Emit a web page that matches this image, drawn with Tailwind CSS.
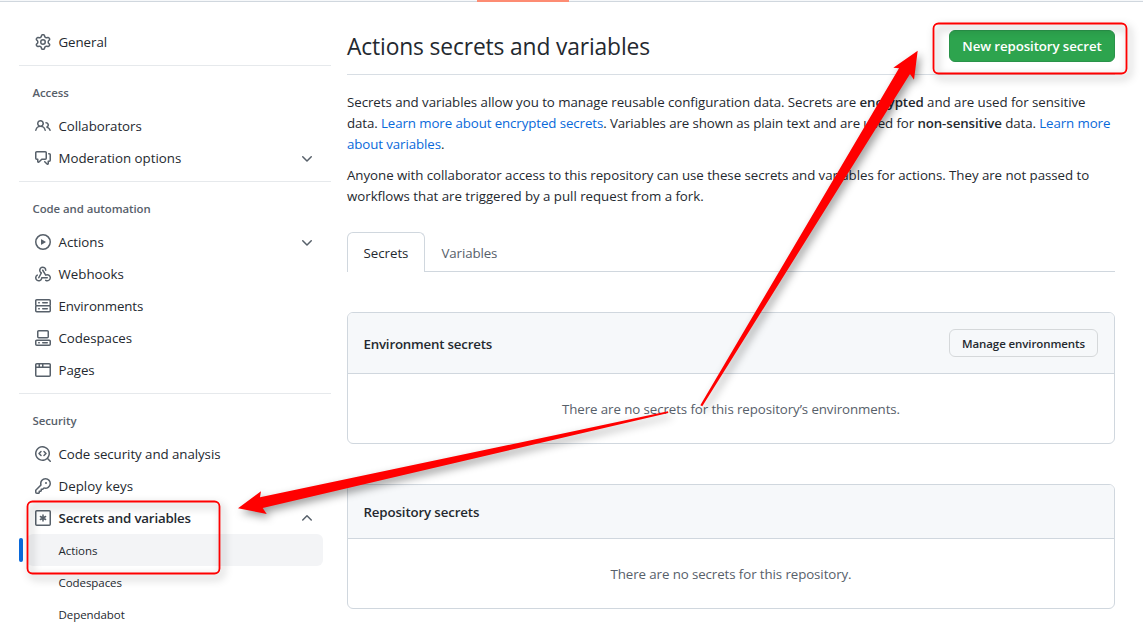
<!DOCTYPE html>
<html lang="en">
<head>
<meta charset="utf-8">
<title>Actions secrets and variables</title>
<script src="https://cdn.jsdelivr.net/npm/@tailwindcss/browser@4"></script>
</head>
<body class="relative h-[633px] w-[1143px] overflow-hidden bg-white font-['Open_Sans','Noto_Sans',sans-serif] text-[13.3px] text-[#24292f]">
<div class="h-0.5 border-b border-[#d0d7de] bg-[#f6f8fa]"></div>
<div class="absolute left-[477px] top-0 h-0.5 w-[92px] bg-[#fd8c73]"></div>

<div class="flex">
<nav class="ml-[19px] mt-6 w-[312px] shrink-0 whitespace-nowrap tracking-[-0.06px]">
  <div class="flex h-8 items-center gap-[7.5px] pl-4">
    <svg class="size-4 fill-[#57606a]" viewBox="0 0 16 16"><path d="M8 0a8.2 8.2 0 0 1 .701.031C9.444.095 9.99.645 10.16 1.29l.288 1.107c.018.066.079.158.212.224.231.114.454.243.668.386.123.082.233.09.299.071l1.103-.303c.644-.176 1.392.021 1.82.63.27.385.506.792.704 1.218.315.675.111 1.422-.364 1.891l-.814.806c-.049.048-.098.147-.088.294.016.257.016.515 0 .772-.01.147.038.246.088.294l.814.806c.475.469.679 1.216.364 1.891a7.977 7.977 0 0 1-.704 1.217c-.428.61-1.176.807-1.82.63l-1.102-.302c-.067-.019-.177-.011-.3.071a5.909 5.909 0 0 1-.668.386c-.133.066-.194.158-.211.224l-.29 1.106c-.168.646-.715 1.196-1.458 1.26a8.006 8.006 0 0 1-1.402 0c-.743-.064-1.289-.614-1.458-1.26l-.289-1.106c-.018-.066-.079-.158-.212-.224a5.738 5.738 0 0 1-.668-.386c-.123-.082-.233-.09-.299-.071l-1.103.303c-.644.176-1.392-.021-1.82-.63a8.12 8.12 0 0 1-.704-1.218c-.315-.675-.111-1.422.363-1.891l.815-.806c.05-.048.098-.147.088-.294a6.214 6.214 0 0 1 0-.772c.01-.147-.038-.246-.088-.294l-.815-.806C.635 6.045.431 5.298.746 4.623a7.92 7.92 0 0 1 .704-1.217c.428-.61 1.176-.807 1.82-.63l1.102.302c.067.019.177.011.3-.071.214-.143.437-.272.668-.386.133-.066.194-.158.211-.224l.29-1.106C6.009.645 6.556.095 7.299.03 7.53.01 7.764 0 8 0Zm-.571 1.525c-.036.003-.108.036-.137.146l-.289 1.105c-.147.561-.549.967-.998 1.189-.173.086-.34.183-.5.29-.417.278-.97.423-1.529.27l-1.103-.303c-.109-.03-.175.016-.195.045-.22.312-.412.644-.573.99-.014.031-.021.11.059.19l.815.806c.411.406.562.957.53 1.456a4.709 4.709 0 0 0 0 .582c.032.499-.119 1.05-.53 1.456l-.815.806c-.081.08-.073.159-.059.19.162.346.353.677.573.989.02.03.085.076.195.046l1.102-.303c.56-.153 1.113-.008 1.53.27.161.107.328.204.501.29.447.222.85.629.997 1.189l.289 1.105c.029.109.101.143.137.146a6.6 6.6 0 0 0 1.142 0c.036-.003.108-.036.137-.146l.289-1.105c.147-.561.549-.967.998-1.189.173-.086.34-.183.5-.29.417-.278.97-.423 1.529-.27l1.103.303c.109.029.175-.016.195-.045.22-.313.411-.644.573-.99.014-.031.021-.11-.059-.19l-.815-.806c-.411-.406-.562-.957-.53-1.456a4.709 4.709 0 0 0 0-.582c-.032-.499.119-1.05.53-1.456l.815-.806c.081-.08.073-.159.059-.19a6.464 6.464 0 0 0-.573-.989c-.02-.03-.085-.076-.195-.046l-1.102.303c-.56.153-1.113.008-1.53-.27a4.44 4.44 0 0 0-.501-.29c-.447-.222-.85-.629-.997-1.189l-.289-1.105c-.029-.11-.101-.143-.137-.146a6.6 6.6 0 0 0-1.142 0ZM11 8a3 3 0 1 1-6 0 3 3 0 0 1 6 0ZM9.5 8a1.5 1.5 0 1 0-3.001.001A1.5 1.5 0 0 0 9.5 8Z"/></svg>
    <span class="pt-0.5">General</span>
  </div>
  <h3 class="mt-[7px] h-[45px] border-t border-[#e6e9ec] pl-[13.5px] pt-[18px] text-[11.4px] leading-[18px] font-semibold text-[#57606a]">Access</h3>
  <div class="flex h-8 items-center gap-[7.5px] pl-4">
    <svg class="size-4 fill-[#57606a]" viewBox="0 0 16 16"><path d="M2 5.5a3.5 3.5 0 1 1 5.898 2.549 5.508 5.508 0 0 1 3.034 4.084.75.75 0 1 1-1.482.235 4 4 0 0 0-7.9 0 .75.75 0 0 1-1.482-.236A5.507 5.507 0 0 1 3.102 8.05 3.493 3.493 0 0 1 2 5.5ZM11 4a3.001 3.001 0 0 1 2.22 5.018 5.01 5.01 0 0 1 2.56 3.012.749.749 0 0 1-.885.954.752.752 0 0 1-.549-.514 3.507 3.507 0 0 0-2.522-2.372.75.75 0 0 1-.574-.73v-.352a.75.75 0 0 1 .416-.672A1.5 1.5 0 0 0 11 5.5.75.75 0 0 1 11 4Zm-5.5-.5a2 2 0 1 0-.001 3.999A2 2 0 0 0 5.5 3.5Z"/></svg>
    <span class="pt-0.5">Collaborators</span>
  </div>
  <div class="flex h-8 items-center gap-[7.5px] pl-4 pr-4">
    <svg class="size-4 fill-[#57606a]" viewBox="0 0 16 16"><path d="M1.75 1h8.5c.966 0 1.75.784 1.75 1.75v5.5A1.75 1.75 0 0 1 10.25 10H7.061l-2.574 2.573A1.458 1.458 0 0 1 2 11.543V10h-.25A1.75 1.75 0 0 1 0 8.25v-5.5C0 1.784.784 1 1.75 1ZM1.5 2.75v5.5c0 .138.112.25.25.25h1a.75.75 0 0 1 .75.75v2.19l2.72-2.72a.749.749 0 0 1 .53-.22h3.5a.25.25 0 0 0 .25-.25v-5.5a.25.25 0 0 0-.25-.25h-8.5a.25.25 0 0 0-.25.25Zm13 2a.25.25 0 0 0-.25-.25h-.5a.75.75 0 0 1 0-1.5h.5c.966 0 1.75.784 1.75 1.75v5.5A1.75 1.75 0 0 1 14.25 12H14v1.543a1.458 1.458 0 0 1-2.487 1.03L9.22 12.28a.749.749 0 0 1 .326-1.275.749.749 0 0 1 .734.215l2.22 2.22v-2.19a.75.75 0 0 1 .75-.75h1a.25.25 0 0 0 .25-.25Z"/></svg>
    <span class="grow pt-0.5 tracking-normal">Moderation options</span>
    <svg class="mt-0.5 size-4 fill-[#57606a]" viewBox="0 0 16 16"><path d="M12.78 5.22a.749.749 0 0 1 0 1.06l-4.25 4.25a.749.749 0 0 1-1.06 0L3.22 6.28a.749.749 0 1 1 1.06-1.06L8 8.939l3.72-3.719a.749.749 0 0 1 1.06 0Z"/></svg>
  </div>
  <h3 class="mt-[7px] h-[45px] border-t border-[#e6e9ec] pl-[13.5px] pt-[18px] text-[11.4px] leading-[18px] font-semibold text-[#57606a]">Code and automation</h3>
  <div class="flex h-8 items-center gap-[7.5px] pl-4 pr-4">
    <svg class="size-4 fill-[#57606a]" viewBox="0 0 16 16"><path d="M8 0a8 8 0 1 1 0 16A8 8 0 0 1 8 0ZM1.5 8a6.5 6.5 0 1 0 13 0 6.5 6.5 0 0 0-13 0Zm4.879-2.773 4.264 2.559a.25.25 0 0 1 0 .428l-4.264 2.559A.25.25 0 0 1 6 10.559V5.442a.25.25 0 0 1 .379-.215Z"/></svg>
    <span class="grow pt-0.5 tracking-normal">Actions</span>
    <svg class="mt-0.5 size-4 fill-[#57606a]" viewBox="0 0 16 16"><path d="M12.78 5.22a.749.749 0 0 1 0 1.06l-4.25 4.25a.749.749 0 0 1-1.06 0L3.22 6.28a.749.749 0 1 1 1.06-1.06L8 8.939l3.72-3.719a.749.749 0 0 1 1.06 0Z"/></svg>
  </div>
  <div class="flex h-8 items-center gap-[7.5px] pl-4">
    <svg class="size-4 fill-[#57606a]" viewBox="0 0 16 16"><path d="M5.5 4.25a2.25 2.25 0 0 1 4.5 0 .75.75 0 0 0 1.5 0 3.75 3.75 0 1 0-6.14 2.889l-2.272 4.258a.75.75 0 0 0 1.324.706L7 7.25a.75.75 0 0 0-.309-1.015A2.25 2.25 0 0 1 5.5 4.25Z"/><path d="M7.364 3.607a.75.75 0 0 1 1.03.257l2.608 4.349a3.75 3.75 0 1 1-.628 6.785.75.75 0 0 1 .752-1.299 2.25 2.25 0 1 0-.033-3.88.75.75 0 0 1-1.03-.256L7.107 4.636a.75.75 0 0 1 .257-1.03Z"/><path d="M2.9 8.776A.75.75 0 0 1 2.625 9.8 2.25 2.25 0 1 0 6 11.75a.75.75 0 0 1 .75-.751h5.5a.75.75 0 0 1 0 1.5H7.425a3.751 3.751 0 1 1-5.55-3.998.75.75 0 0 1 1.024.274Z"/></svg>
    <span class="pt-0.5 tracking-normal">Webhooks</span>
  </div>
  <div class="flex h-8 items-center gap-[7.5px] pl-4">
    <svg class="size-4 fill-[#57606a]" viewBox="0 0 16 16"><path d="M1.75 1h12.5c.966 0 1.75.784 1.75 1.75v4c0 .372-.116.717-.314 1 .198.283.314.628.314 1v4a1.75 1.75 0 0 1-1.75 1.75H1.75A1.75 1.75 0 0 1 0 12.75v-4c0-.358.109-.707.314-1a1.739 1.739 0 0 1-.314-1v-4C0 1.784.784 1 1.75 1ZM1.5 2.75v4c0 .138.112.25.25.25h12.5a.25.25 0 0 0 .25-.25v-4a.25.25 0 0 0-.25-.25H1.75a.25.25 0 0 0-.25.25Zm.25 5.75a.25.25 0 0 0-.25.25v4c0 .138.112.25.25.25h12.5a.25.25 0 0 0 .25-.25v-4a.25.25 0 0 0-.25-.25ZM7 4.75A.75.75 0 0 1 7.75 4h4.5a.75.75 0 0 1 0 1.5h-4.5A.75.75 0 0 1 7 4.75ZM7.75 10h4.5a.75.75 0 0 1 0 1.5h-4.5a.75.75 0 0 1 0-1.5ZM3 4.75A.75.75 0 0 1 3.75 4h.5a.75.75 0 0 1 0 1.5h-.5A.75.75 0 0 1 3 4.75ZM3.75 10h.5a.75.75 0 0 1 0 1.5h-.5a.75.75 0 0 1 0-1.5Z"/></svg>
    <span class="pt-0.5 tracking-[-0.12px]">Environments</span>
  </div>
  <div class="flex h-8 items-center gap-[7.5px] pl-4">
    <svg class="size-4 fill-[#57606a]" viewBox="0 0 16 16"><path d="M0 11.25c0-.966.784-1.75 1.75-1.75h12.5c.966 0 1.75.784 1.75 1.75v3A1.75 1.75 0 0 1 14.25 16H1.75A1.75 1.75 0 0 1 0 14.25Zm2-9.5C2 .784 2.784 0 3.75 0h8.5C13.216 0 14 .784 14 1.75v5a1.75 1.75 0 0 1-1.75 1.75h-8.5A1.75 1.75 0 0 1 2 6.75Zm1.75-.25a.25.25 0 0 0-.25.25v5c0 .138.112.25.25.25h8.5a.25.25 0 0 0 .25-.25v-5a.25.25 0 0 0-.25-.25Zm-2 9.5a.25.25 0 0 0-.25.25v3c0 .138.112.25.25.25h12.5a.25.25 0 0 0 .25-.25v-3a.25.25 0 0 0-.25-.25Z"/><path d="M7 12.75a.75.75 0 0 1 .75-.75h4.5a.75.75 0 0 1 0 1.5h-4.5a.75.75 0 0 1-.75-.75Zm-4 0a.75.75 0 0 1 .75-.75h.5a.75.75 0 0 1 0 1.5h-.5a.75.75 0 0 1-.75-.75Z"/></svg>
    <span class="pt-0.5">Codespaces</span>
  </div>
  <div class="flex h-8 items-center gap-[7.5px] pl-4">
    <svg class="size-4 fill-[#57606a]" viewBox="0 0 16 16"><path d="M0 2.75C0 1.784.784 1 1.75 1h12.5c.966 0 1.75.784 1.75 1.75v10.5A1.75 1.75 0 0 1 14.25 15H1.75A1.75 1.75 0 0 1 0 13.25ZM14.5 6h-13v7.25c0 .138.112.25.25.25h12.5a.25.25 0 0 0 .25-.25Zm-6-3.5v2h6V2.75a.25.25 0 0 0-.25-.25ZM5 2.5v2h2v-2Zm-3.25 0a.25.25 0 0 0-.25.25V4.5h2v-2Z"/></svg>
    <span class="pt-0.5">Pages</span>
  </div>
  <h3 class="mt-[7px] h-[45px] border-t border-[#e6e9ec] pl-[13.5px] pt-[18px] text-[11.4px] leading-[18px] font-semibold text-[#57606a]">Security</h3>
  <div class="flex h-8 items-center gap-[7.5px] pl-4">
    <svg class="size-4 fill-[#57606a]" viewBox="0 0 16 16"><path d="M8.47 4.97a.75.75 0 0 0 0 1.06L9.94 7.5 8.47 8.97a.75.75 0 1 0 1.06 1.06l2-2a.75.75 0 0 0 0-1.06l-2-2a.75.75 0 0 0-1.06 0ZM6.53 6.03a.75.75 0 0 0-1.06-1.06l-2 2a.75.75 0 0 0 0 1.06l2 2a.75.75 0 1 0 1.06-1.06L5.06 7.5l1.47-1.47Z"/><path d="M12.246 13.307a7.5 7.5 0 1 1 1.06-1.06l2.474 2.473a.749.749 0 1 1-1.06 1.06ZM1.5 7.5a6.002 6.002 0 0 0 3.608 5.504 6.002 6.002 0 0 0 6.486-1.117.748.748 0 0 1 .292-.293A6 6 0 1 0 1.5 7.5Z"/></svg>
    <span class="pt-0.5">Code security and analysis</span>
  </div>
  <div class="flex h-8 items-center gap-[7.5px] pl-4">
    <svg class="size-4 fill-[#57606a]" viewBox="0 0 16 16"><path d="M10.5 0a5.499 5.499 0 1 1-1.288 10.848l-.932.932a.749.749 0 0 1-.53.22H7v.75a.749.749 0 0 1-.22.53l-.5.5a.749.749 0 0 1-.53.22H5v.75a.749.749 0 0 1-.22.53l-.5.5a.749.749 0 0 1-.53.22h-2A1.75 1.75 0 0 1 0 14.25v-2c0-.199.079-.389.22-.53l4.932-4.932A5.5 5.5 0 0 1 10.5 0Zm-4 5.5c-.001.431.069.86.205 1.269a.75.75 0 0 1-.181.768L1.5 12.56v1.69c0 .138.112.25.25.25h1.69l.06-.06v-1.19a.75.75 0 0 1 .75-.75h1.19l.06-.06v-1.19a.75.75 0 0 1 .75-.75h1.19l1.023-1.025a.75.75 0 0 1 .768-.18A4 4 0 1 0 6.5 5.5ZM11 6a1 1 0 1 1 0-2 1 1 0 0 1 0 2Z"/></svg>
    <span class="pt-0.5 tracking-[0.03px]">Deploy keys</span>
  </div>
  <div class="flex h-8 items-center gap-[7.5px] pl-4 pr-4">
    <svg class="size-4 fill-none stroke-[#57606a] stroke-[1.5]" viewBox="0 0 16 16"><rect x=".75" y=".75" width="14.5" height="14.5" rx="1"/><path stroke-linecap="round" d="M8 5v6M5.400 6.500l5.200 3M5.400 9.500l5.200-3"/></svg>
    <span class="grow pt-0.5 font-semibold tracking-[-0.18px]">Secrets and variables</span>
    <svg class="size-4 fill-[#57606a]" viewBox="0 0 16 16"><path d="M3.22 10.53a.749.749 0 0 1 0-1.06l4.25-4.25a.749.749 0 0 1 1.06 0l4.25 4.25a.749.749 0 1 1-1.06 1.06L8 6.811 4.28 10.53a.749.749 0 0 1-1.06 0Z"/></svg>
  </div>
  <div class="flex h-8 items-center text-[11.5px]">
    <div class="h-6 w-1 rounded-md bg-[#0969da]"></div>
    <div class="ml-1 flex h-8 w-[296px] items-center rounded-md bg-[#f3f4f6] pl-[31.5px] pt-0.5">Actions</div>
  </div>
  <div class="flex h-8 items-center pl-[39.5px] pt-0.5 text-[11.5px]">Codespaces</div>
  <div class="flex h-8 items-center pl-[39.5px] pt-0.5 text-[11.5px]">Dependabot</div>
</nav>

<main class="ml-4 w-[768px] shrink-0 whitespace-nowrap tracking-[-0.05px]">
  <div class="mt-7 flex h-[45px] items-start justify-between border-b border-[#d8dee4]">
    <h1 class="pt-px text-[22.8px] leading-8 tracking-[-0.14px]">Actions secrets and variables</h1>
    <button class="h-8 w-[166px] rounded-md border border-[#2a934a] bg-[#2da44e] pt-0.5 text-[13.3px] font-semibold tracking-[-0.1px] text-white">New repository secret</button>
  </div>
  <p class="mt-[17px] leading-[21px]">Secrets and variables allow you to manage reusable configuration data. Secrets are <b class="font-semibold tracking-[-0.1px]">encrypted</b> and are used for sensitive<br><span class="tracking-[-0.1px]">data. <a class="text-[#0969da]">Learn more about encrypted secrets</a>. Variables are shown as plain text and are used for <b class="font-semibold">non-sensitive</b> data. <a class="text-[#0969da]">Learn more<br>about variables</a>.</span></p>
  <p class="mt-2.5 leading-[21px]">Anyone with collaborator access to this repository can use these secrets and variables for actions. They are not passed to<br><span class="tracking-[-0.03px]">workflows that are triggered by a pull request from a fork.</span></p>
  <div class="mt-[25px] flex h-10 border-b border-[#d0d7de]">
    <div class="flex h-10 w-[78px] items-center justify-center rounded-t-md border border-b-0 border-[#d0d7de] bg-white pb-px pt-1">Secrets</div>
    <div class="flex h-10 items-center pl-[16.5px] pt-1 tracking-[-0.12px] text-[#57606a]">Variables</div>
  </div>
  <section class="mt-10 h-[132px] overflow-hidden rounded-md border border-[#d0d7de]">
    <div class="flex h-[61px] items-center justify-between border-b border-[#d0d7de] bg-[#f6f8fa] pl-[15.5px] pr-4">
      <h2 class="pt-[3px] font-semibold tracking-[-0.2px]">Environment secrets</h2>
      <button class="h-7 w-[149px] rounded-md border border-[#d5d8da] bg-[#f6f8fa] pt-0.5 text-[11.5px] font-semibold tracking-[-0.1px]">Manage environments</button>
    </div>
    <div class="flex h-[70px] items-center justify-center pt-0.5 tracking-[-0.09px] text-[#57606a]">There are no secrets for this repository’s environments.</div>
  </section>
  <section class="mt-10 h-[125px] overflow-hidden rounded-md border border-[#d0d7de]">
    <div class="flex h-[54px] items-center border-b border-[#d0d7de] bg-[#f6f8fa] px-[15.5px]">
      <h2 class="pt-0.5 font-semibold tracking-[-0.14px]">Repository secrets</h2>
    </div>
    <div class="flex h-[70px] items-center justify-center pt-0.5 tracking-[-0.09px] text-[#57606a]">There are no secrets for this repository.</div>
  </section>
</main>
</div>

<svg class="absolute left-0 top-0 h-[633px] w-[1143px] drop-shadow-[3px_4px_4px_rgba(0,0,0,0.4)]" viewBox="0 0 1143 633">
  <rect x="933.500" y="23.500" width="193" height="50" rx="5" fill="none" stroke="#ff0000" stroke-width="1.8"/>
  <rect x="27.500" y="501.500" width="192" height="72" rx="5" fill="none" stroke="#ff0000" stroke-width="1.8"/>
  <path fill="#ff0000" d="M917.700 50.700 893.300 67.700 899 68.300 700.300 405.300 702.300 406.300 910 74 914 79.700Z"/>
  <path fill="#ff0000" d="M238 508.300 261 491.300 260 497.300 668 411.300 668.300 413 262.700 508 266.700 514Z"/>
</svg>
</body>
</html>
